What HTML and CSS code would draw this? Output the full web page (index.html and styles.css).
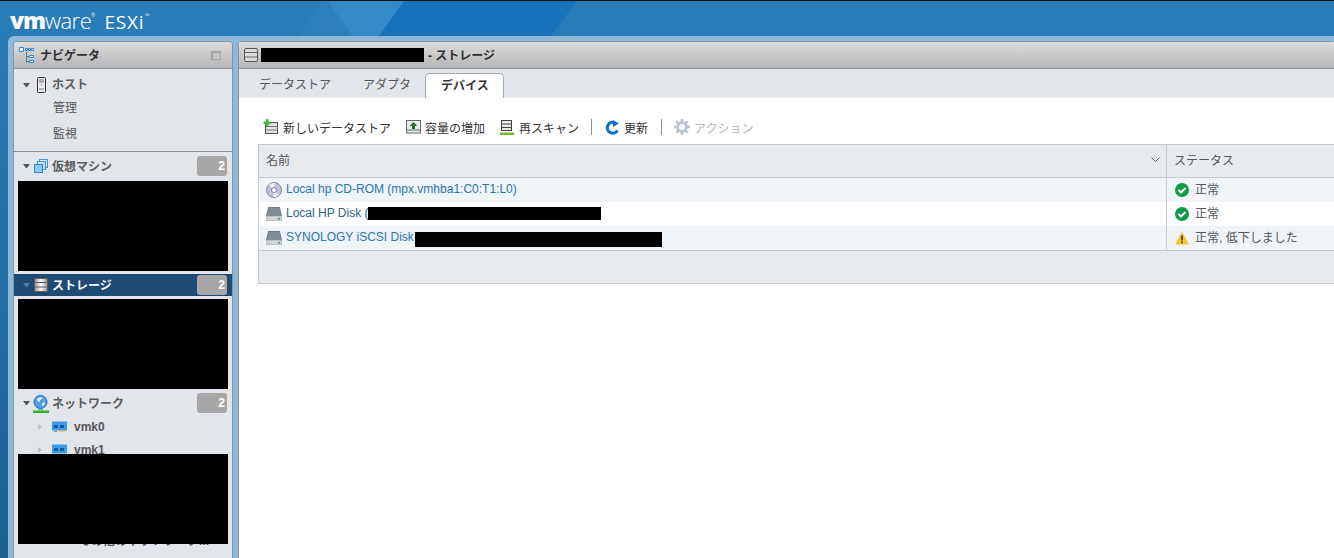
FILE: index.html
```html
<!DOCTYPE html>
<html lang="ja">
<head>
  <meta charset="UTF-8" />
  <title>ESXi - ストレージ</title>
  <link rel="stylesheet" href="styles.css">
</head>
<body>

  <!-- Header -->
  <div id="top-bar">
    <svg class="top-shapes" width="1334" height="36" viewBox="0 0 1334 36">
      <polygon points="404,0 577,0 550,36 378,36" fill="#1772b9"/>
      <polygon points="323,0 404,0 378,36 298,36" fill="#2d80bd"/>
      <polygon points="328,0 404,0 378,36 353,36" fill="#348ac6"/>
    </svg>
    <div class="logo">
      <span class="logo-vm">vm</span><span class="logo-ware">ware<sup>®</sup></span>
      <span class="logo-esxi">ESXi<sup>™</sup></span>
    </div>
  </div>

  <div class="shell">
    <!-- Navigator -->
    <div class="nav-panel">
      <div class="panel-title">
        <svg class="icon" width="16" height="17" viewBox="0 0 16 17">
          <path d="M7.500 5v11M7.500 9.500h3M7.500 14.500h3" fill="none" stroke="#667079"/>
          <path d="M0.500 0.500h4v4h-4zM6.500 1.500h2v2h-2zM9.500 1.500h2v2h-2zM12.500 1.500h2v2h-2zM10.500 8.500h4v2h-4zM10.500 13.500h4v2h-4z" fill="#fff" stroke="#2b8ad8"/>
        </svg>
        <span class="panel-name">ナビゲータ</span>
        <span class="collapse-btn"></span>
      </div>

      <div class="nav-section host-section">
        <div class="nav-row">
          <span class="arrow"></span>
          <svg class="icon" width="9" height="16" viewBox="0 0 9 16">
            <rect x="0.500" y="0.500" width="8" height="15" rx="1" fill="#e8e8e8" stroke="#333"/>
            <path d="M2 3h5M2 5h5M2 12h5" stroke="#777"/>
            <rect x="4" y="7.500" width="1" height="1" fill="#555"/>
          </svg>
          <span class="nav-label">ホスト</span>
        </div>
        <div class="nav-sub">管理</div>
        <div class="nav-sub">監視</div>
      </div>

      <div class="nav-section vm-section">
        <div class="nav-row">
          <span class="arrow"></span>
          <svg class="icon" width="14" height="14" viewBox="0 0 14 14">
            <rect x="5.500" y="0.500" width="8" height="8" fill="#d7ecfb" stroke="#3a97d8"/>
            <rect x="3.500" y="2.500" width="8" height="8" fill="#bfe0f8" stroke="#3a97d8"/>
            <rect x="0.500" y="5.500" width="8" height="8" fill="#8fc8f2" stroke="#2b8ad8"/>
          </svg>
          <span class="nav-label">仮想マシン</span>
          <span class="count">2</span>
        </div>
        <div class="redacted nav-block"></div>
      </div>

      <div class="nav-section">
        <div class="nav-row selected">
          <span class="arrow"></span>
          <svg class="icon" width="14" height="14" viewBox="0 0 14 14">
            <defs>
              <linearGradient id="disk-bar" x1="0" y1="0" x2="1" y2="0">
                <stop offset="0" stop-color="#9a9a9a"/>
                <stop offset="0.500" stop-color="#ffffff"/>
                <stop offset="1" stop-color="#9a9a9a"/>
              </linearGradient>
            </defs>
            <rect width="14" height="14" fill="#5c5c5c"/>
            <path d="M1 1h12v3H1zM1 5h12v3.500H1zM1 9.500h12V13H1z" fill="url(#disk-bar)"/>
          </svg>
          <span class="nav-label">ストレージ</span>
          <span class="count">2</span>
        </div>
        <div class="redacted nav-block"></div>
      </div>

      <div class="nav-section network-section">
        <div class="nav-row">
          <span class="arrow"></span>
          <svg class="icon globe" width="16" height="18" viewBox="0 0 16 18">
            <circle cx="7.500" cy="7" r="6.500" fill="#4e9fe6" stroke="#1b6fc4"/>
            <path d="M4 4c2-2 5-2 6-1-1 2-3 1-3 3S4 7 4 4zM9 8l3-1c0 2-1 4-3 4z" fill="#dff0fb"/>
            <path d="M5 14h5v1H5z" fill="#999"/>
            <rect y="15.500" width="16" height="2.500" fill="#2bb52b"/>
          </svg>
          <span class="nav-label">ネットワーク</span>
          <span class="count">2</span>
        </div>
        <div class="nic-row">
          <span class="arrow-right"></span>
          <svg class="icon" width="15" height="11" viewBox="0 0 15 11">
            <rect y="0.500" width="15" height="9" fill="#3a9be8"/>
            <path d="M2 4h4v3H2zM8 4h4v3H8z" fill="#155d9e"/>
            <path d="M2 10h3v1H2z" fill="#888"/><path d="M7 9.500h7v1H7z" fill="#d8b243"/>
          </svg>
          <span class="nic-label">vmk0</span>
        </div>
        <div class="nic-row">
          <span class="arrow-right"></span>
          <svg class="icon" width="15" height="11" viewBox="0 0 15 11">
            <rect y="0.500" width="15" height="9" fill="#3a9be8"/>
            <path d="M2 4h4v3H2zM8 4h4v3H8z" fill="#155d9e"/>
            <path d="M2 10h3v1H2z" fill="#888"/><path d="M7 9.500h7v1H7z" fill="#d8b243"/>
          </svg>
          <span class="nic-label">vmk1</span>
        </div>
        <div class="nic-more">その他のネットワーク...</div>
        <div class="redacted nav-cover"></div>
      </div>
    </div>

    <!-- Main panel -->
    <div class="main-panel">
      <div class="panel-title main-title">
        <svg class="icon" width="14" height="14" viewBox="0 0 14 14">
          <rect x="0.500" y="0.500" width="13" height="13" rx="1.500" fill="#dcdcdc" stroke="#555"/>
          <path d="M1 4.500h12M1 9h12" stroke="#666"/>
        </svg>
        <span class="redacted title-block"></span>
        <span class="panel-name">- ストレージ</span>
      </div>

      <div class="tabs">
        <div class="tab">データストア</div>
        <div class="tab">アダプタ</div>
        <div class="tab active">デバイス</div>
      </div>

      <div class="content">
        <div class="toolbar">
          <div class="tool">
            <svg width="16" height="16" viewBox="0 0 16 16">
              <rect x="2.500" y="3.500" width="12" height="11" fill="#e3e3e3" stroke="#555"/>
              <path d="M3 7.500h11M3 11h11" stroke="#777"/>
              <path d="M3 0h2.500v2.500H8V5H5.500v2.500H3V5H0.500V2.500H3z" fill="#47b548"/>
            </svg>
            新しいデータストア
          </div>
          <div class="tool">
            <svg width="15" height="14" viewBox="0 0 15 14">
              <rect x="0.500" y="0.500" width="14" height="12.500" fill="#e4efe2" stroke="#667"/>
              <path d="M7.500 2l4 4H9v3H6V6H3.500z" fill="#2f6b35"/>
              <path d="M1 10h13" stroke="#667"/>
            </svg>
            容量の増加
          </div>
          <div class="tool rescan">
            <svg width="14" height="15" viewBox="0 0 14 15">
              <rect x="1.500" y="0.500" width="10" height="10" fill="#e8e8e8" stroke="#444"/>
              <path d="M2 4h9M2 7.500h9" stroke="#444"/>
              <rect y="12.500" width="14" height="2.500" fill="#7cb82f"/>
            </svg>
            再スキャン
          </div>
          <span class="tool-sep"></span>
          <div class="tool">
            <svg width="15" height="15" viewBox="0 0 15 15">
              <path d="M12.500 10.500A5.500 5.500 0 1 1 8.500 2.200" fill="none" stroke="#0e6fd0" stroke-width="3"/>
              <path d="M8 0l6 3.500-6 3.500z" fill="#0e6fd0"/>
            </svg>
            更新
          </div>
          <span class="tool-sep"></span>
          <div class="tool disabled">
            <svg width="16" height="16" viewBox="0 0 16 16">
              <circle cx="8" cy="8" r="4.500" fill="none" stroke="#b9c6d6" stroke-width="3"/>
              <path d="M8 0v16M0 8h16M2.300 2.300l11.400 11.400M13.700 2.300L2.300 13.700" stroke="#b9c6d6" stroke-width="2.500" stroke-dasharray="3 10 3 0"/>
            </svg>
            アクション
          </div>
        </div>

        <div class="grid">
          <div class="grid-row grid-head">
            <div class="col-name">名前
              <svg class="sort" width="9" height="5" viewBox="0 0 9 5"><path d="M0.500 0.500l4 4 4-4" fill="none" stroke="#666"/></svg>
            </div>
            <div class="col-status">ステータス</div>
          </div>

          <div class="grid-row odd">
            <div class="col-name">
              <svg class="row-icon" width="16" height="16" viewBox="0 0 16 16">
                <circle cx="8" cy="8" r="7.500" fill="#bfbfd8" stroke="#8a8a9c"/>
                <path d="M8 8L3 3a7 7 0 0 1 6-2zM8 8l5 5a7 7 0 0 1-6 2z" fill="#f0f0fa"/>
                <circle cx="8" cy="8" r="2.500" fill="#fff" stroke="#7a7ac0"/>
              </svg>
              <a class="device">Local hp CD-ROM (mpx.vmhba1:C0:T1:L0)</a>
            </div>
            <div class="col-status">
              <svg class="status-icon" width="14" height="14" viewBox="0 0 14 14">
                <circle cx="7" cy="7" r="7" fill="#0f9b46"/>
                <path d="M3.500 7l2.500 2.500 4.500-4.500" fill="none" stroke="#fff" stroke-width="2"/>
              </svg>
              正常
            </div>
          </div>

          <div class="grid-row">
            <div class="col-name">
              <svg class="row-icon" width="16" height="14" viewBox="0 0 16 14">
                <path d="M2.500 0.500h11l2 9h-15z" fill="#7f8b94" stroke="#6c7780"/>
                <rect y="9" width="16" height="5" rx="1" fill="#cfd4d6" stroke="#8a9298" stroke-width="0.500"/>
                <rect x="12" y="11" width="2" height="1.500" fill="#3aa845"/>
              </svg>
              <a class="device dark">Local HP Disk (</a><span class="redacted disk-one"></span>
            </div>
            <div class="col-status">
              <svg class="status-icon" width="14" height="14" viewBox="0 0 14 14">
                <circle cx="7" cy="7" r="7" fill="#0f9b46"/>
                <path d="M3.500 7l2.500 2.500 4.500-4.500" fill="none" stroke="#fff" stroke-width="2"/>
              </svg>
              正常
            </div>
          </div>

          <div class="grid-row odd">
            <div class="col-name">
              <svg class="row-icon" width="16" height="14" viewBox="0 0 16 14">
                <path d="M2.500 0.500h11l2 9h-15z" fill="#7f8b94" stroke="#6c7780"/>
                <rect y="9" width="16" height="5" rx="1" fill="#cfd4d6" stroke="#8a9298" stroke-width="0.500"/>
                <rect x="12" y="11" width="2" height="1.500" fill="#3aa845"/>
              </svg>
              <a class="device">SYNOLOGY iSCSI Disk</a><span class="redacted disk-two"></span>
            </div>
            <div class="col-status">
              <svg class="status-icon" width="14" height="14" viewBox="0 0 14 14">
                <path d="M7 0.500l6.800 13H0.200z" fill="#f2c733"/>
                <path d="M6.200 4.500h1.600v5H6.200zM6.200 10.500h1.600v1.700H6.200z" fill="#333"/>
              </svg>
              正常, 低下しました
            </div>
          </div>

          <div class="grid-foot"></div>
        </div>
      </div>
    </div>
  </div>

</body>
</html>
```

FILE: styles.css
```css
* {
  margin: 0;
  padding: 0;
  box-sizing: border-box;
  font-family: "Liberation Sans", "Noto Sans CJK JP", sans-serif;
}

html, body {
  height: 100%;
  overflow: hidden;
}

body {
  display: flex;
  flex-direction: column;
  background: linear-gradient(#2a7db9, #1c608f);
}

#top-bar {
  position: relative;
  height: 36px;
  flex: none;
  border-top: 1px solid #0a0f14;
  background-color: #287cb8;
  overflow: hidden;
}

.top-shapes {
  position: absolute;
  top: 0;
  left: 0;
}

.logo {
  position: relative;
  display: flex;
  align-items: baseline;
  padding: 6px 0 0 10px;
  color: white;
  line-height: 26px;
}

.logo-vm, .logo-ware, .logo-esxi {
  font-family: "Open Sans", sans-serif;
}

.logo-vm {
  font-size: 23px;
  font-weight: 800;
  letter-spacing: -1px;
}

.logo-ware {
  font-size: 22px;
  font-weight: 300;
  letter-spacing: -0.5px;
}

.logo-esxi {
  font-size: 19px;
  font-weight: 400;
  letter-spacing: 0.8px;
  margin-left: 10px;
}

.logo sup {
  font-size: 5px;
  vertical-align: 12px;
  line-height: 0;
  font-family: "Liberation Sans", sans-serif;
}

.shell {
  flex: 1;
  display: flex;
  gap: 5px;
  min-height: 0;
  margin-left: 8px;
  padding: 5px 0 0 5px;
  background-color: #8db8da;
  border-radius: 6px 0 0 0;
}

.nav-panel, .main-panel {
  background-color: #e2e5ea;
  border: 1px solid #8d9299;
  border-bottom: none;
  border-radius: 4px 4px 0 0;
}

.nav-panel {
  position: relative;
  width: 220px;
  flex: none;
  overflow: hidden;
}

.main-panel {
  flex: 1;
  display: flex;
  flex-direction: column;
  min-width: 0;
  border-right: none;
  background-color: white;
}

.panel-title {
  display: flex;
  align-items: center;
  gap: 5px;
  height: 27px;
  padding: 0 4px 0 5px;
  background: linear-gradient(#dddddd, #b5b5b7);
  border-bottom: 1px solid #8d9299;
  flex: none;
}

.panel-name {
  margin-bottom: 1px;
  font-size: 12px;
  font-weight: bold;
  color: #2e3033;
}

.collapse-btn {
  width: 10px;
  height: 9px;
  margin-left: auto;
  margin-right: 7px;
  border: 1px solid #a3a3a3;
  border-top-width: 2px;
  border-left-width: 2px;
  background-color: #c5c5c5;
}

.main-title {
  padding-left: 5px;
  gap: 2px;
}

.main-title .icon {
  margin-right: 1px;
}

.title-block {
  width: 163px;
  height: 14px;
  margin-right: 2px;
}

.redacted {
  display: inline-block;
  background-color: black;
}

.icon {
  flex: none;
}

.nav-section {
  position: relative;
}

.host-section {
  height: 83px;
  border-bottom: 1px solid #8d9299;
}

.nav-row {
  display: flex;
  align-items: center;
  height: 22px;
  padding: 0 5px 0 9px;
  gap: 4px;
  color: #5a5c5e;
}

.host-section .nav-row {
  height: 28px;
  padding-top: 3px;
}

.host-section .icon {
  margin: 0 2px 0 3px;
}

.vm-section {
  padding-top: 3px;
}

.nav-label {
  margin-bottom: 2px;
  font-size: 12px;
  font-weight: bold;
}

.arrow {
  width: 7px;
  height: 4px;
  flex: none;
  border-left: 3px solid transparent;
  border-right: 3px solid transparent;
  border-top: 4px solid #555;
}

.count {
  width: 30px;
  height: 20px;
  margin-left: auto;
  padding-right: 2px;
  background-color: #a7a7a7;
  border-radius: 3px;
  color: white;
  font-size: 12px;
  font-weight: bold;
  line-height: 20px;
  text-align: right;
}

.nav-sub {
  height: 26px;
  padding-left: 39px;
  font-size: 12px;
  line-height: 22px;
  color: #55575a;
}

.nav-block {
  display: block;
  width: 210px;
  height: 90px;
  margin: 3px 0 3px 4px;
}

.vm-section .nav-block {
  margin-top: 4px;
}

.selected {
  background-color: #1f4a74;
  color: white;
}

.selected .arrow {
  border-top-color: #5d7b99;
}

.network-section .nav-row {
  gap: 3px;
  margin-bottom: 1px;
}

.globe {
  margin-top: 2px;
}

.nic-row {
  display: flex;
  align-items: center;
  height: 23px;
  padding-left: 24px;
  gap: 7px;
}

.nic-row .icon {
  margin-left: 3px;
}

.nic-label {
  font-size: 12px;
  font-weight: bold;
  color: #55575a;
}

.arrow-right {
  width: 0;
  height: 0;
  flex: none;
  border-top: 3.500px solid transparent;
  border-bottom: 3.500px solid transparent;
  border-left: 4px solid #c0c2c6;
}

.nic-more {
  height: 23px;
  margin-top: 70px;
  padding-left: 65px;
  font-size: 12px;
  font-weight: bold;
  color: #55575a;
}

/* black box lies over the vmk rows */
.nav-cover {
  position: absolute;
  top: 62px;
  left: 4px;
  width: 210px;
  height: 90px;
}

.tabs {
  display: flex;
  align-items: flex-end;
  height: 29px;
  padding-left: 4px;
  background-color: #e2e5ea;
  flex: none;
}

.tab {
  height: 25px;
  padding: 0 16px;
  font-size: 12px;
  line-height: 25px;
  color: #55575a;
}

.tab.active {
  margin-left: -2px;
  padding: 0 14px 0 15px;
  background-color: white;
  border: 1px solid #a4a8ad;
  border-bottom: none;
  border-radius: 5px 5px 0 0;
  font-weight: bold;
  color: #333;
}

.content {
  flex: 1;
  padding: 16px 0 0 19px;
  background-color: white;
}

.toolbar {
  display: flex;
  align-items: center;
  height: 26px;
  gap: 15px;
  margin-bottom: 4px;
  padding-left: 5px;
}

.tool {
  display: flex;
  align-items: center;
  gap: 4px;
  font-size: 12px;
  color: #333;
}

.tool.rescan {
  gap: 5px;
  margin-right: -1px;
}

.tool.disabled {
  margin-left: -1px;
  color: #b4b7ba;
}

.tool-sep {
  width: 1px;
  height: 16px;
  background-color: #8d9196;
  margin: 0 -2px;
}

.grid {
  border: 1px solid #c8cbce;
  border-right: none;
}

.grid-row {
  display: flex;
  height: 24px;
  font-size: 12px;
  color: #55575a;
}

.grid-row .col-name {
  padding-bottom: 2px;
}

.grid-row .col-status {
  padding-bottom: 4px;
}

.grid-head {
  height: 33px;
  background-color: #e8ebee;
  border-bottom: 1px solid #c8cbce;
}

.grid-head .col-name, .grid-head .col-status {
  padding-bottom: 4px;
}

.odd {
  background-color: #eff4f9;
}

.col-name {
  display: flex;
  align-items: center;
  width: 908px;
  padding-left: 7px;
  border-right: 1px solid #c8cbce;
}

.col-status {
  display: flex;
  align-items: center;
  flex: 1;
  padding-left: 7px;
  white-space: nowrap;
}

.grid-head .col-name {
  justify-content: space-between;
  padding-right: 6px;
}

.row-icon {
  margin: 2px 4px 0 0;
  flex: none;
}

.status-icon {
  margin: 4px 6px 0 1px;
  flex: none;
}

.device {
  color: #2a77ab;
  white-space: nowrap;
}

.device.dark {
  color: #2c6287;
}

.disk-one {
  width: 233px;
  height: 13px;
}

.disk-two {
  width: 247px;
  height: 15px;
  margin: 5px 0 0 1px;
}

.grid-foot {
  height: 33px;
  background-color: #e8ebee;
  border-top: 1px solid #c8cbce;
}
```
